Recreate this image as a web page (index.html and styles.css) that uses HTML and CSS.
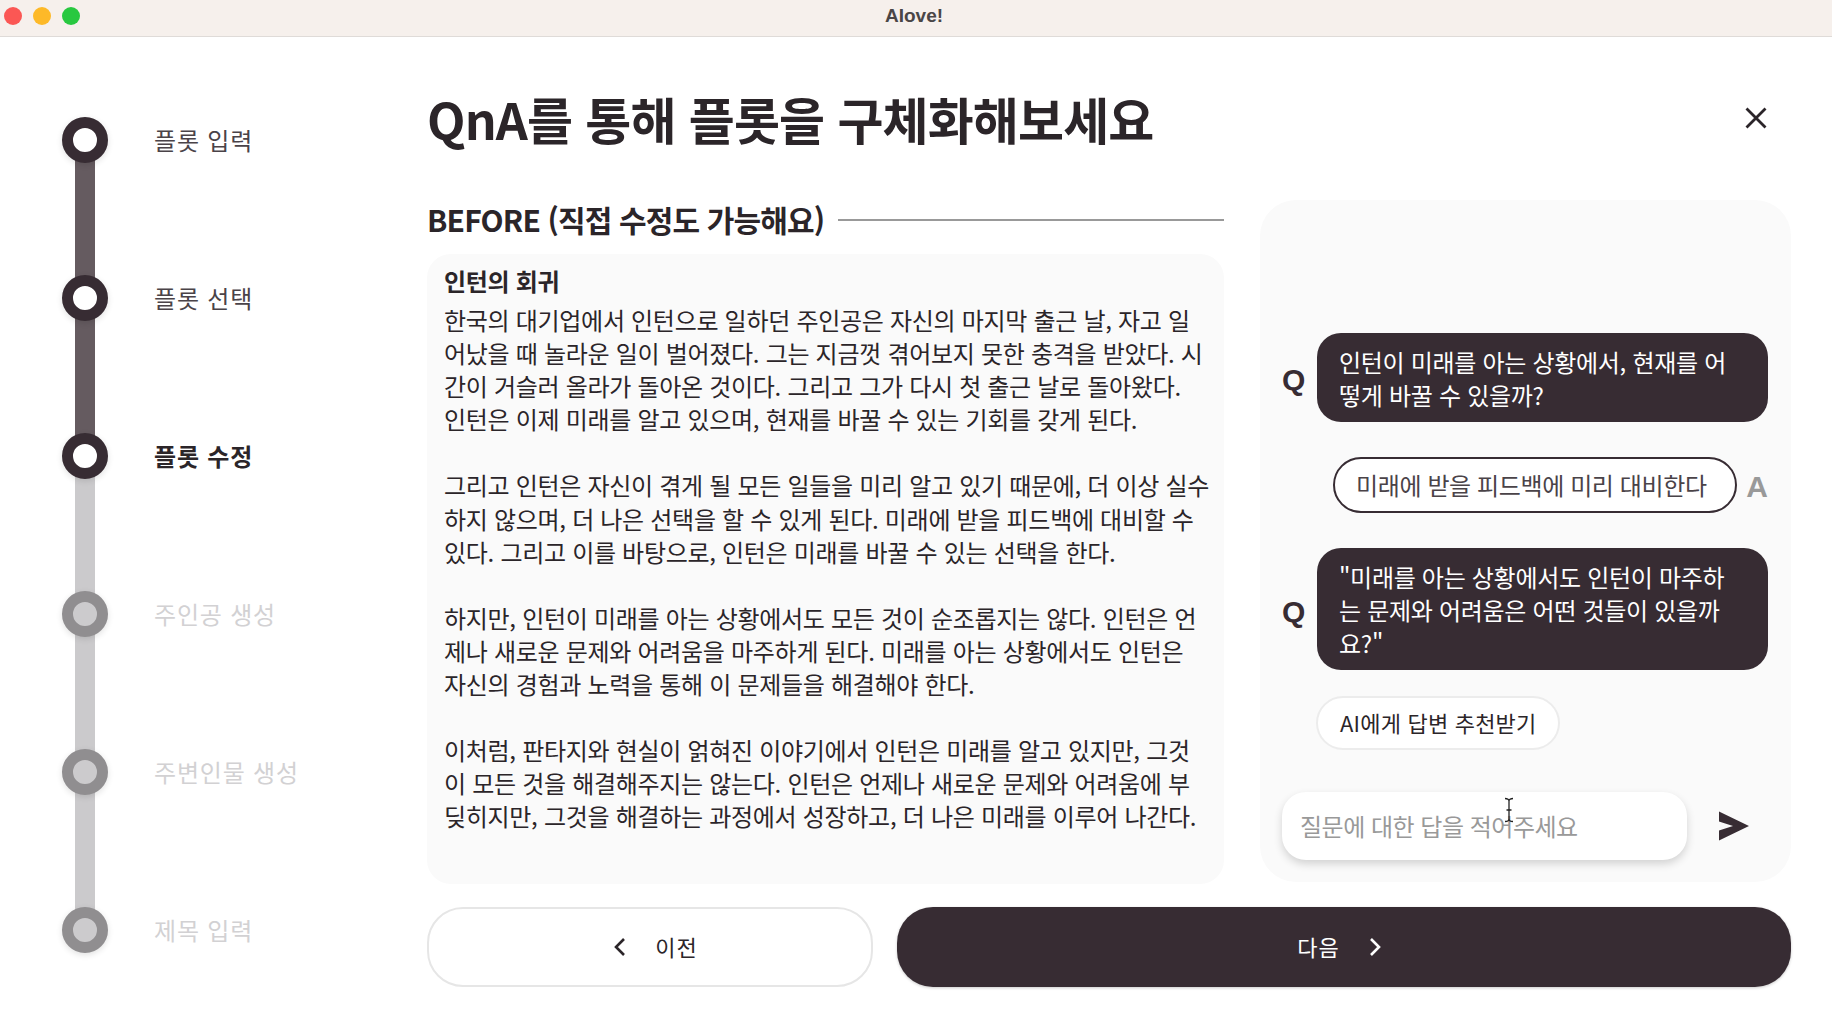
FILE: index.html
```html
<!DOCTYPE html>
<html lang="ko">
<head>
    <meta charset="UTF-8">
    <title>AIove!</title>
    <link rel="stylesheet" href="styles.css">
</head>
<body>
<div class="titlebar">
    <div class="lights">
        <span class="light red"></span>
        <span class="light yellow"></span>
        <span class="light green"></span>
    </div>
    <div class="app-name">AIove!</div>
</div>
<div class="app">
    <ul class="steps">
        <li class="step done"><span class="dot"></span><span class="step-name">플롯 입력</span></li>
        <li class="step done"><span class="dot"></span><span class="step-name">플롯 선택</span></li>
        <li class="step current"><span class="dot"></span><span class="step-name">플롯 수정</span></li>
        <li class="step"><span class="dot"></span><span class="step-name">주인공 생성</span></li>
        <li class="step"><span class="dot"></span><span class="step-name">주변인물 생성</span></li>
        <li class="step last"><span class="dot"></span><span class="step-name">제목 입력</span></li>
    </ul>
    <div class="main">
        <div class="head">
            <h1>QnA를 통해 플롯을 구체화해보세요</h1>
            <svg class="close" width="24" height="24" viewBox="0 0 24 24"><path d="M2.500 2.500L21.500 21.500M21.500 2.500L2.500 21.500" stroke="#2b2529" stroke-width="2.800" fill="none"/></svg>
        </div>
        <div class="columns">
            <div class="before">
                <div class="before-head">
                    <h2>BEFORE (직접 수정도 가능해요)</h2>
                    <span class="rule"></span>
                </div>
                <div class="plot">
                    <h3>인턴의 회귀</h3>
                    <p>한국의 대기업에서 인턴으로 일하던 주인공은 자신의 마지막 출근 날, 자고 일<br>어났을 때 놀라운 일이 벌어졌다. 그는 지금껏 겪어보지 못한 충격을 받았다. 시<br>간이 거슬러 올라가 돌아온 것이다. 그리고 그가 다시 첫 출근 날로 돌아왔다.<br>인턴은 이제 미래를 알고 있으며, 현재를 바꿀 수 있는 기회를 갖게 된다.</p>
                    <p>그리고 인턴은 자신이 겪게 될 모든 일들을 미리 알고 있기 때문에, 더 이상 실수<br>하지 않으며, 더 나은 선택을 할 수 있게 된다. 미래에 받을 피드백에 대비할 수<br>있다. 그리고 이를 바탕으로, 인턴은 미래를 바꿀 수 있는 선택을 한다.</p>
                    <p>하지만, 인턴이 미래를 아는 상황에서도 모든 것이 순조롭지는 않다. 인턴은 언<br>제나 새로운 문제와 어려움을 마주하게 된다. 미래를 아는 상황에서도 인턴은<br>자신의 경험과 노력을 통해 이 문제들을 해결해야 한다.</p>
                    <p>이처럼, 판타지와 현실이 얽혀진 이야기에서 인턴은 미래를 알고 있지만, 그것<br>이 모든 것을 해결해주지는 않는다. 인턴은 언제나 새로운 문제와 어려움에 부<br>딪히지만, 그것을 해결하는 과정에서 성장하고, 더 나은 미래를 이루어 나간다.</p>
                </div>
            </div>
            <div class="chat">
                <div class="q-row">
                    <span class="q-mark">Q</span>
                    <div class="q-bubble">인턴이 미래를 아는 상황에서, 현재를 어<br>떻게 바꿀 수 있을까?</div>
                </div>
                <div class="a-row">
                    <div class="a-bubble">미래에 받을 피드백에 미리 대비한다</div>
                    <span class="a-mark">A</span>
                </div>
                <div class="q-row">
                    <span class="q-mark">Q</span>
                    <div class="q-bubble">"미래를 아는 상황에서도 인턴이 마주하<br>는 문제와 어려움은 어떤 것들이 있을까<br>요?"</div>
                </div>
                <div class="suggest">AI에게 답변 추천받기</div>
                <div class="input-row">
                    <div class="answer">질문에 대한 답을 적어주세요</div>
                    <svg class="send" width="32" height="30" viewBox="0 0 32 30"><path d="M1 0.500L31 15L1 29.500L1 19.500L15 15L1 10.500Z" fill="#372c33"/></svg>
                    <svg class="cursor" width="12" height="26" viewBox="0 0 12 26"><path d="M2 1.500C4 1.500 6 2 6 4L6 22C6 24 4 24.500 2 24.500M10 1.500C8 1.500 6 2 6 4M6 22C6 24 8 24.500 10 24.500M3.500 13L8.500 13" stroke="#222" stroke-width="1.300" fill="none"/></svg>
                </div>
            </div>
        </div>
        <div class="nav">
            <div class="btn prev">
                <svg width="14" height="20" viewBox="0 0 14 20"><path d="M11 2L3 10L11 18" stroke="#2b2529" stroke-width="2.600" fill="none"/></svg>
                <span>이전</span>
            </div>
            <div class="btn next">
                <span>다음</span>
                <svg width="14" height="20" viewBox="0 0 14 20"><path d="M3 2L11 10L3 18" stroke="#fff" stroke-width="2.600" fill="none"/></svg>
            </div>
        </div>
    </div>
</div>
</body>
</html>
```
FILE: styles.css
```css
*{
    margin: 0;
    padding: 0;
    box-sizing: border-box;
}
html,body{
    height: 1029px;
    overflow: hidden;
    background: #fff;
}
body{
    font-family: "Noto Sans CJK KR", "Noto Sans", sans-serif;
    font-size: 24px;
    color: #2b2529;
}

/* window bar */
.titlebar{
    position: relative;
    display: flex;
    align-items: center;
    justify-content: center;
    height: 37px;
    background: #f6f0ec;
    border-bottom: 1px solid #dfdbd8;
}
.lights{
    position: absolute;
    top: 7px;
    left: 4px;
    display: flex;
    gap: 11px;
}
.light{
    width: 18px;
    height: 18px;
    border-radius: 50%;
}
.red{
    background: #fb5754;
}
.yellow{
    background: #fdb928;
}
.green{
    background: #28c840;
}
.app-name{
    font-family: "Liberation Sans", sans-serif;
    font-size: 19px;
    font-weight: 700;
    color: #4a4646;
    padding: 0 4px 5px 0;
}

.app{
    display: flex;
    height: 992px;
}

/* stepper */
.steps{
    width: 427px;
    flex-shrink: 0;
    padding: 80px 0 0 62px;
    list-style: none;
}
.step{
    position: relative;
    display: flex;
    align-items: center;
    gap: 46px;
    height: 46px;
    margin-bottom: 112px;
    color: #d2d1d3;
}
.step::after{
    content: "";
    position: absolute;
    top: 40px;
    left: 13px;
    width: 20px;
    height: 124px;
    background: #cbcacc;
}
.step.last::after{
    display: none;
}
.step.done::after{
    background: #655b60;
}
.step-name{
    padding-bottom: 2px;
    letter-spacing: 0.8px;
}
.dot{
    position: relative;
    z-index: 1;
    width: 46px;
    height: 46px;
    border: 11px solid #908e90;
    border-radius: 50%;
    background: #cccbcd;
    box-shadow: 0 2px 6px rgba(0,0,0,0.12);
}
.done .dot,.current .dot{
    border-color: #372c33;
    background: #fff;
}
.done{
    color: #4a4348;
}
.current{
    color: #2b2529;
    font-weight: 700;
}

/* main */
.main{
    flex: 1;
    padding: 47px 41px 0 0;
}
.head{
    display: flex;
    align-items: center;
    justify-content: space-between;
    height: 72px;
    padding-right: 23px;
}
h1{
    align-self: flex-start;
    font-size: 50px;
    font-weight: 700;
    line-height: 68px;
    letter-spacing: -0.85px;
}
.close{
    margin-top: -4px;
}
.columns{
    display: flex;
    gap: 36px;
    height: 684px;
    margin-top: 44px;
}
.before{
    display: flex;
    flex-direction: column;
    width: 797px;
}
.before-head{
    display: flex;
    align-items: center;
    gap: 14px;
    height: 40px;
    margin-bottom: 14px;
}
h2{
    padding-bottom: 2px;
    font-size: 30px;
    font-weight: 700;
    line-height: 38px;
    white-space: nowrap;
    letter-spacing: -0.85px;
}
.rule{
    flex: 1;
    height: 2px;
    background: #999;
}
.plot{
    flex: 1;
    padding: 10px 16px 10px 17px;
    border-radius: 24px;
    background: #fafafa;
    line-height: 33.100px;
    white-space: nowrap;
    letter-spacing: -0.3px;
}
h3{
    font-size: 24px;
    font-weight: 700;
    line-height: 33px;
    margin-bottom: 6px;
}
.plot p{
    margin-bottom: 33.100px;
}

/* chat */
.chat{
    display: flex;
    flex-direction: column;
    flex: 1;
    justify-content: flex-end;
    height: 682px;
    padding: 0 23px 22px 22px;
    border-radius: 36px;
    background: #fafafa;
}
.q-row{
    display: flex;
    align-items: center;
    gap: 12px;
}
.q-mark,.a-mark{
    padding-top: 5px;
    font-family: "Liberation Sans", sans-serif;
    font-size: 30px;
    font-weight: 700;
    line-height: 1;
}
.q-mark{
    width: 23px;
    color: #372c33;
}
.q-bubble{
    flex: 1;
    padding: 11.500px 22px;
    border-radius: 24px;
    background: #372c33;
    color: #fff;
    line-height: 33px;
    letter-spacing: -0.3px;
}
.a-row{
    display: flex;
    align-items: center;
    justify-content: flex-end;
    gap: 9px;
    margin: 35px 0;
}
.a-mark{
    padding-top: 3px;
    color: #999;
}
.a-bubble{
    width: 404px;
    height: 56px;
    padding-right: 8px;
    border: 2px solid #372c33;
    border-radius: 28px;
    background: #fff;
    line-height: 52px;
    letter-spacing: -0.4px;
    text-align: center;
    color: #4a4348;
    white-space: nowrap;
}
.suggest{
    align-self: flex-start;
    height: 54px;
    margin: 26px 0 42px 34px;
    padding: 0 22px;
    border: 2px solid #ececec;
    border-radius: 27px;
    background: #fff;
    font-size: 22px;
    line-height: 48px;
    letter-spacing: 0.2px;
    white-space: nowrap;
}
.input-row{
    position: relative;
    display: flex;
    align-items: center;
    gap: 31px;
}
.answer{
    width: 405px;
    height: 68px;
    padding-left: 18px;
    border-radius: 24px;
    background: #fff;
    box-shadow: 0 4px 8px rgba(0,0,0,0.16);
    line-height: 67px;
    letter-spacing: -0.5px;
    color: #999;
}
.cursor{
    position: absolute;
    top: 5px;
    left: 221px;
}

/* bottom buttons */
.nav{
    display: flex;
    gap: 24px;
    margin-top: 23px;
}
.btn{
    display: flex;
    align-items: center;
    justify-content: center;
    gap: 28px;
    height: 80px;
    border-radius: 36px;
    font-size: 22px;
    letter-spacing: 1px;
}
.btn span{
    padding-bottom: 2px;
}
.prev{
    width: 446px;
    padding-left: 11px;
    border: 2px solid #e6e6e6;
    background: #fff;
}
.next{
    flex: 1;
    padding-right: 9px;
    background: #372c33;
    color: #fff;
    box-shadow: 0 1px 3px rgba(0,0,0,0.2);
}
```
